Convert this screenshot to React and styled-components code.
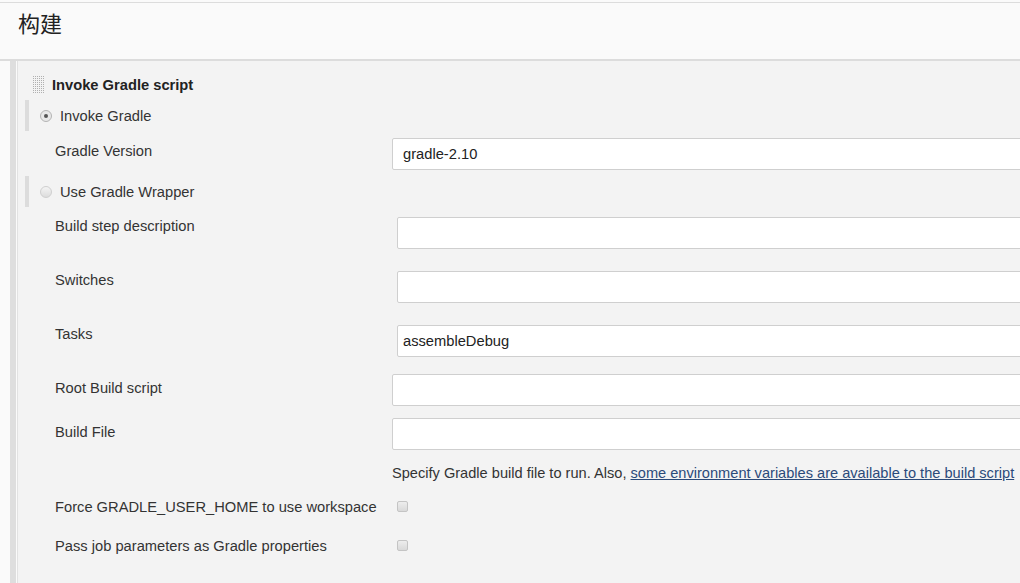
import React from 'react'
import styled, { createGlobalStyle } from 'styled-components'

const GlobalStyle = createGlobalStyle`
  html, body {
    margin: 0;
    padding: 0;
    background: #fafafa;
    overflow: hidden;
  }
  body {
    font-family: "Liberation Sans", Arial, "Noto Sans CJK SC", sans-serif;
    font-size: 14.7px;
    color: #333;
  }
`

const Page = styled.div`
  width: 1080px;
  padding-top: 2px;
`

const Header = styled.div`
  height: 59px;
  border-top: 1px solid #dcdcdc;
  border-bottom: 2px solid #dcdcdc;
  background: #fafafa;
  padding-left: 18px;
  box-sizing: border-box;
`

const HeaderTitle = styled.h1`
  margin: 0;
  padding-top: 4px;
  font-family: "Noto Sans CJK SC", "Liberation Sans", sans-serif;
  font-size: 22px;
  font-weight: 400;
  line-height: 30px;
  color: #222;
`

const Section = styled.div`
  display: flex;
  padding-left: 10px;
  gap: 1px;
  height: 540px;
`

const SideBar = styled.div`
  width: 6px;
  background: #dedede;
`

const Panel = styled.div`
  flex: 1;
  background: #f3f3f3;
  border-left: 1px solid #e2e2e2;
  padding-left: 7px;
`

const TitleRow = styled.div`
  display: flex;
  align-items: center;
  gap: 7px;
  margin-top: 15px;
  padding-left: 8px;
  height: 18px;
`

const Title = styled.span`
  font-weight: 700;
  color: #222;
`

const RadioBlock = styled.div`
  display: flex;
  align-items: center;
  gap: 8px;
  height: 31px;
  margin-top: ${p => p.top}px;
  border-left: 4px solid #dcdcdc;
  padding-left: 11px;
`

const Radio = styled.span`
  position: relative;
  width: 12px;
  height: 12px;
  border-radius: 50%;
  box-sizing: border-box;
  border: 1px solid ${p => (p.checked ? '#b4b4b4' : '#cfcfcf')};
  background: ${p => (p.checked ? '#e8e8e8' : 'linear-gradient(#f4f4f4, #dcdcdc)')};

  &::after {
    content: '';
    display: ${p => (p.checked ? 'block' : 'none')};
    position: absolute;
    left: 3px;
    top: 3px;
    width: 4px;
    height: 4px;
    border-radius: 50%;
    background: #555;
  }
`

const Row = styled.div`
  display: flex;
  align-items: flex-start;
  margin-top: ${p => p.top}px;
  padding-left: 30px;
`

const Label = styled.div`
  width: ${p => (p.indent ? 342 : 337)}px;
  flex-shrink: 0;
  padding-top: ${p => p.pad}px;
  line-height: 17px;
  white-space: nowrap;
`

const Input = styled.div`
  flex: 1;
  height: 32px;
  box-sizing: border-box;
  background: #fff;
  border: 1px solid #cfcfcf;
  border-radius: 2px;
  padding: 0 ${p => (p.indent ? 5 : 10)}px;
  display: flex;
  align-items: center;
  color: #222;
`

const Help = styled.div`
  margin-top: 15px;
  padding-left: 367px;
  line-height: 17px;
  font-size: 14.6px;
  white-space: nowrap;
`

const HelpLink = styled.a`
  color: #2b4a7a;
  text-decoration: underline;
`

const CheckBox = styled.span`
  display: inline-block;
  width: 11px;
  height: 11px;
  margin-top: 2px;
  box-sizing: border-box;
  border: 1px solid #c4c4c4;
  border-radius: 2px;
  background: linear-gradient(#ededed, #d9d9d9);
`

const Handle = () => (
  <svg width="12" height="18" viewBox="0 0 12 18">
    <defs>
      <pattern id="dots" width="2" height="2" patternUnits="userSpaceOnUse">
        <rect width="1" height="1" fill="#b0b0b0" />
      </pattern>
    </defs>
    <rect width="12" height="18" fill="url(#dots)" />
  </svg>
)

const App = () => (
  <Page>
    <GlobalStyle />
    <Header>
      <HeaderTitle>构建</HeaderTitle>
    </Header>
    <Section>
      <SideBar />
      <Panel>
        <TitleRow>
          <Handle />
          <Title>Invoke Gradle script</Title>
        </TitleRow>

        <RadioBlock top={6}>
          <Radio checked />
          <span>Invoke Gradle</span>
        </RadioBlock>
        <Row top={7}>
          <Label pad={5}>Gradle Version</Label>
          <Input>gradle-2.10</Input>
        </Row>

        <RadioBlock top={6}>
          <Radio />
          <span>Use Gradle Wrapper</span>
        </RadioBlock>

        <Row top={10}>
          <Label indent pad={1}>Build step description</Label>
          <Input indent />
        </Row>
        <Row top={22}>
          <Label indent pad={1}>Switches</Label>
          <Input indent />
        </Row>
        <Row top={22}>
          <Label indent pad={1}>Tasks</Label>
          <Input indent>assembleDebug</Input>
        </Row>
        <Row top={17}>
          <Label pad={6}>Root Build script</Label>
          <Input />
        </Row>
        <Row top={12}>
          <Label pad={6}>Build File</Label>
          <Input />
        </Row>
        <Help>
          Specify Gradle build file to run. Also,{' '}
          <HelpLink href="#">some environment variables are available to the build script</HelpLink>
        </Help>
        <Row top={17}>
          <Label indent pad={0}>Force GRADLE_USER_HOME to use workspace</Label>
          <CheckBox />
        </Row>
        <Row top={22}>
          <Label indent pad={0}>Pass job parameters as Gradle properties</Label>
          <CheckBox />
        </Row>
      </Panel>
    </Section>
  </Page>
)

export default App
